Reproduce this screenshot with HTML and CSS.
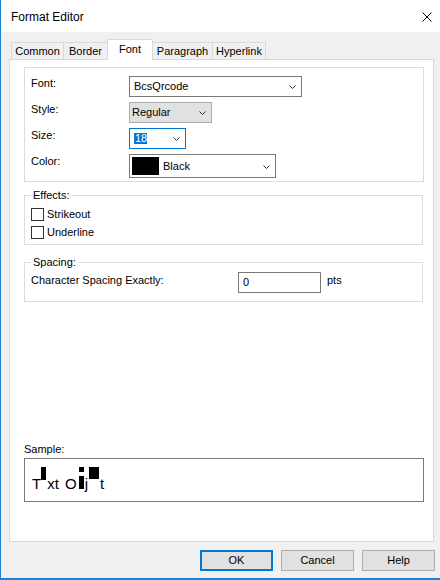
FILE: index.html
```html
<!DOCTYPE html>
<html lang="en">
<head>
<meta charset="utf-8">
<title>Format Editor</title>
<link rel="stylesheet" href="styles.css">
</head>
<body>
<div class="window">
  <div class="titlebar">
    <span class="title">Format Editor</span>
    <svg class="close" width="10" height="10" viewBox="0 0 10 10"><path d="M0.5 0.5L9.5 9.5M9.5 0.5L0.5 9.5" stroke="#000" stroke-width="1" fill="none"/></svg>
  </div>
  <div class="client">
    <div class="tabs">
      <div class="tab t-common">Common</div>
      <div class="tab t-border">Border</div>
      <div class="tab active t-font">Font</div>
      <div class="tab t-para">Paragraph</div>
      <div class="tab t-hyper">Hyperlink</div>
    </div>
    <div class="panel">
      <div class="fontgroup">
        <div class="lbl">Font:</div>
        <div class="combo c-font"><span class="val">BcsQrcode</span><svg class="chev" width="7" height="4" viewBox="0 0 7 4"><path d="M0.5 0.5L3.5 3.5L6.5 0.5" fill="none" stroke="#333"/></svg></div>
        <div class="lbl">Style:</div>
        <div class="combo c-style"><span class="val">Regular</span><svg class="chev" width="7" height="4" viewBox="0 0 7 4"><path d="M0.5 0.5L3.5 3.5L6.5 0.5" fill="none" stroke="#333"/></svg></div>
        <div class="lbl">Size:</div>
        <div class="combo c-size"><span class="val"><span class="sel">18</span></span><svg class="chev" width="7" height="4" viewBox="0 0 7 4"><path d="M0.5 0.5L3.5 3.5L6.5 0.5" fill="none" stroke="#333"/></svg></div>
        <div class="lbl">Color:</div>
        <div class="combo c-color"><span class="swatch"></span><span class="val">Black</span><svg class="chev" width="7" height="4" viewBox="0 0 7 4"><path d="M0.5 0.5L3.5 3.5L6.5 0.5" fill="none" stroke="#333"/></svg></div>
      </div>
      <fieldset class="fs effects">
        <legend>Effects:</legend>
        <div class="check"><span class="box"></span><span class="ctext">Strikeout</span></div>
        <div class="check"><span class="box"></span><span class="ctext">Underline</span></div>
      </fieldset>
      <fieldset class="fs spacing">
        <legend>Spacing:</legend>
        <div class="sp-row"><span class="sp-label">Character Spacing Exactly:</span><span class="input">0</span><span class="unit">pts</span></div>
      </fieldset>
      <div class="sample-label">Sample:</div>
      <div class="sample"><span>T</span><span class="blk b1"></span><span>xt </span><span class="o">O</span><span class="blk b2"></span><span>j</span><span class="blk b3"></span><span>t</span></div>
    </div>
    <div class="buttons">
      <button class="btn default">OK</button>
      <button class="btn">Cancel</button>
      <button class="btn">Help</button>
    </div>
  </div>
</div>
</body>
</html>
```

FILE: styles.css
```css
html, body {
  margin: 0;
  padding: 0;
}
body {
  width: 440px;
  height: 580px;
  overflow: hidden;
  font-family: "Liberation Sans", Arial, sans-serif;
  font-size: 11px;
  line-height: 13px;
  color: #000;
  background: #fff;
}
.window {
  width: 440px;
  height: 580px;
  box-sizing: border-box;
  border-left: 1px solid #1883d7;
  border-bottom: 2px solid #1883d7;
  display: flex;
  flex-direction: column;
  background: #f0f0f0;
}
.titlebar {
  height: 32px;
  flex: none;
  background: #fff;
  display: flex;
  align-items: center;
  padding-left: 10px;
}
.title {
  font-size: 12px;
  line-height: 14px;
  margin-top: 1px;
}
.close {
  margin-left: auto;
  margin-right: 8px;
  margin-top: 2px;
}
.client {
  flex: 1;
  padding: 7px 6px 0 8px;
  display: flex;
  flex-direction: column;
}
.tabs {
  display: flex;
  align-items: flex-end;
  margin-left: 2px;
}
.tab {
  box-sizing: border-box;
  height: 17px;
  border: 1px solid #d9d9d9;
  border-bottom: none;
  padding-top: 2px;
  text-align: center;
  background: #f0f0f0;
}
.tab + .tab {
  margin-left: -1px;
}
.tab.active {
  height: 21px;
  margin-bottom: -1px;
  padding-top: 3px;
  background: #fff;
  position: relative;
  z-index: 1;
}
.t-common { width: 53px; }
.t-border { width: 45px; }
.t-font { width: 46px; }
.t-para { width: 61px; }
.t-hyper { width: 54px; }
.panel {
  height: 483px;
  box-sizing: border-box;
  border: 1px solid #d9d9d9;
  background: #fff;
  padding: 7px 9px 0 14px;
}
.fontgroup {
  display: grid;
  grid-template-columns: 98px 1fr;
  row-gap: 5px;
  justify-items: start;
  border: 1px solid #dcdcdc;
  padding: 8px 0 3px 6px;
}
.lbl {
  padding-top: 1px;
  align-self: start;
}
.combo {
  display: flex;
  align-items: center;
  height: 21px;
  box-sizing: border-box;
  border: 1px solid #7a7a7a;
  background: #fff;
  padding: 0 5px 0 4px;
}
.combo .val {
  flex: 1;
}
.chev {
  flex: none;
  display: block;
}
.c-font { width: 173px; }
.c-style {
  width: 83px;
  background: #e1e1e1;
  border-color: #adadad;
  padding-left: 2px;
}
.c-size {
  width: 57px;
  border-color: #0078d7;
}
.sel {
  display: inline-block;
  width: 13px;
  height: 11px;
  line-height: 11px;
  background: #0078d7;
  color: #fff;
  padding-left: 1px;
  box-sizing: border-box;
}
.c-color {
  width: 147px;
  height: 24px;
  padding-left: 2px;
  align-items: flex-start;
}
.c-color .val {
  margin-left: 4px;
  align-self: center;
}
.c-color .chev {
  align-self: center;
  margin-top: 1px;
}
.swatch {
  width: 27px;
  height: 18px;
  margin-top: 2px;
  background: #000;
  flex: none;
}
.fs {
  margin: 0 1px 0 0;
  border: 1px solid #dcdcdc;
  min-inline-size: 0;
}
.fs legend {
  padding: 0 2px;
  margin-left: 0;
  line-height: 13px;
}
.effects {
  margin-top: 7px;
  padding: 6px 0 5px 6px;
  display: flex;
  flex-direction: column;
  gap: 5px;
}
.check {
  display: flex;
  align-items: center;
  height: 13px;
}
.box {
  width: 13px;
  height: 13px;
  box-sizing: border-box;
  border: 1px solid #333;
  background: #fff;
  flex: none;
}
.ctext {
  margin-left: 3px;
}
.spacing {
  margin-top: 11px;
  padding: 3px 0 8px 6px;
}
.sp-row {
  display: flex;
  align-items: flex-start;
}
.sp-label {
  width: 207px;
  padding-top: 2px;
}
.input {
  width: 83px;
  height: 21px;
  box-sizing: border-box;
  border: 1px solid #7a7a7a;
  padding-left: 4px;
  line-height: 19px;
}
.unit {
  margin-left: 6px;
  padding-top: 2px;
}
.sample-label {
  margin-top: 141px;
}
.sample {
  height: 44px;
  box-sizing: border-box;
  margin-top: 2px;
  border: 1px solid #7a7a7a;
  padding: 8px 7px 0;
  font-size: 15px;
  line-height: 17px;
  white-space: pre;
}
.sample .o {
  margin-left: 2px;
}
.blk {
  display: inline-block;
  background: #000;
  vertical-align: baseline;
}
.b1 {
  width: 5px;
  height: 13px;
  margin: 0 1px 9px 0;
}
.b2 {
  width: 5px;
  height: 22px;
  margin: 0 1px 0 2px;
  background: linear-gradient(#000 0 5px, transparent 5px 9px, #000 9px 100%);
}
.b3 {
  width: 10px;
  height: 12px;
  margin: 0 1px 10px 1px;
}
.buttons {
  display: flex;
  justify-content: flex-end;
  gap: 8px;
  margin-top: 8px;
  margin-right: -1px;
}
.btn {
  width: 73px;
  height: 21px;
  box-sizing: border-box;
  border: 1px solid #adadad;
  background: #e1e1e1;
  font: inherit;
  color: #000;
  padding: 0;
  margin: 0;
  display: flex;
  align-items: center;
  justify-content: center;
}
.btn.default {
  border: 2px solid #0078d7;
}
```
